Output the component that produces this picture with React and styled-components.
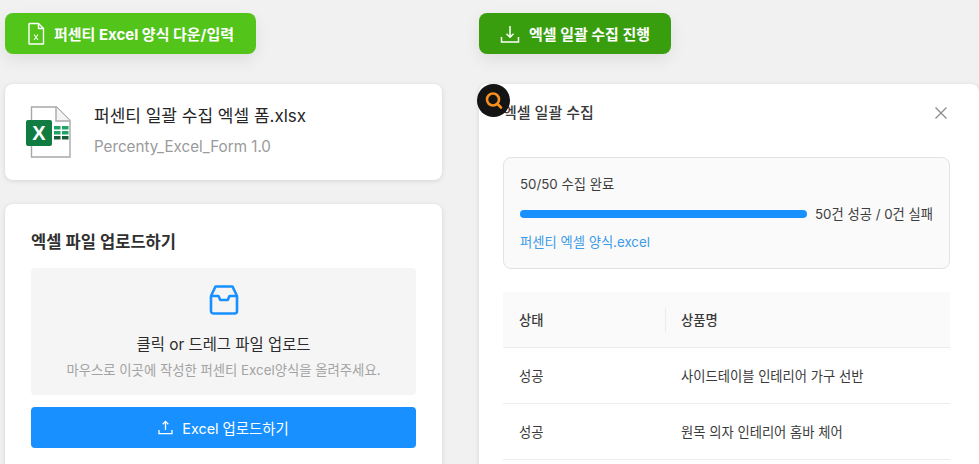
import { createGlobalStyle, styled } from "styled-components";

const Global = createGlobalStyle`
  html, body {
    margin: 0;
    height: 100%;
    overflow: hidden;
    background: #f1f1f1;
  }
  * {
    box-sizing: border-box;
  }
  body {
    font-family: Inter, "Noto Sans CJK KR", "Noto Sans", sans-serif;
  }
`;

const Page = styled.div`
  display: grid;
  grid-template-columns: 437px 500px;
  column-gap: 37px;
  padding: 13px 0 0 5px;
  height: 464px;
  overflow: hidden;
`;

const Column = styled.div`
  display: flex;
  flex-direction: column;
  align-items: flex-start;
`;

const ActionButton = styled.div`
  height: 41px;
  width: ${(p) => p.$width}px;
  border-radius: 8px;
  background: ${(p) => p.$bg};
  color: #fff;
  font-size: 15px;
  font-weight: 700;
  display: flex;
  align-items: center;
  padding-left: ${(p) => p.$pad}px;
  gap: ${(p) => p.$gap}px;
  box-shadow: 0 6px 16px rgba(0, 0, 0, 0.08);
  white-space: nowrap;
`;

const Card = styled.div`
  background: #fff;
  border-radius: 8px;
  width: 100%;
  box-shadow: 0 1px 5px rgba(0, 0, 0, 0.12);
`;

const FileCard = styled(Card)`
  margin-top: 30px;
  height: 96px;
  display: flex;
  align-items: center;
  padding-left: 20px;
  gap: 23px;
`;

const FileText = styled.div`
  display: flex;
  flex-direction: column;
  gap: 9px;
  margin-top: -4px;
`;

const FileName = styled.div`
  font-size: 17px;
  line-height: 24px;
  color: #262626;
`;

const FileVersion = styled.div`
  font-size: 15.2px;
  line-height: 20px;
  color: #9a9a9a;
`;

const UploadCard = styled(Card)`
  margin-top: 24px;
  height: 300px;
  padding: 27px 26px 0;
`;

const UploadTitle = styled.div`
  font-size: 16.5px;
  font-weight: 600;
  line-height: 22px;
  color: #303030;
`;

const DropZone = styled.div`
  margin-top: 15px;
  height: 127px;
  border-radius: 4px;
  background: #f5f5f5;
  display: flex;
  flex-direction: column;
  align-items: center;
  padding-top: 16px;
`;

const DropTitle = styled.div`
  margin-top: 18px;
  font-size: 15.4px;
  line-height: 22px;
  color: #2b2b2b;
`;

const DropHint = styled.div`
  margin-top: 5px;
  font-size: 13.35px;
  line-height: 18px;
  color: #a3a3a3;
  white-space: nowrap;
`;

const UploadButton = styled.div`
  margin-top: 12px;
  height: 41px;
  border-radius: 4px;
  background: #1890ff;
  color: #fff;
  font-size: 14.4px;
  display: flex;
  align-items: center;
  justify-content: center;
  gap: 9px;
`;

const Modal = styled(Card)`
  margin-top: 30px;
  height: 400px;
  width: 500px;
  position: relative;
  padding: 0 29px 0 24px;
`;

const Badge = styled.div`
  position: absolute;
  left: -2px;
  top: 0;
  width: 33px;
  height: 33px;
  border-radius: 50%;
  background: #141414;
  display: flex;
  align-items: center;
  justify-content: center;
`;

const ModalHead = styled.div`
  height: 58px;
  display: flex;
  align-items: center;
  justify-content: space-between;
`;

const ModalTitle = styled.div`
  font-size: 15px;
  font-weight: 500;
  line-height: 20px;
  margin-bottom: 1px;
  color: #3a3a3a;
`;

const CloseIcon = styled.svg`
  width: 14px;
  height: 14px;
  margin-right: 2px;
`;

const ProgressBox = styled.div`
  margin-top: 15px;
  height: 112px;
  border: 1px solid #e3e3e3;
  border-radius: 8px;
  background: #fafafa;
  padding: 17px 16px 0;
  font-size: 13.3px;
  color: #3d3d3d;
`;

const ProgressLabel = styled.div`
  line-height: 18px;
`;

const ProgressRow = styled.div`
  margin-top: 12px;
  display: flex;
  align-items: center;
  gap: 8px;
  line-height: 18px;
  white-space: nowrap;
`;

const Track = styled.div`
  width: 287px;
  height: 8px;
  border-radius: 4px;
  background: #1890ff;
`;

const FileLink = styled.div`
  margin-top: 10px;
  line-height: 18px;
  color: #3c9ae8;
`;

const Table = styled.div`
  margin-top: 23px;
  font-size: 13.3px;
  color: #3a3a3a;
`;

const TableRow = styled.div`
  display: grid;
  grid-template-columns: 146px 1fr;
  height: ${(p) => (p.$head ? 56 : 56)}px;
  align-items: center;
  padding-left: 16px;
  border-bottom: 1px solid #ececec;
  background: ${(p) => (p.$head ? "#fafafa" : "#fff")};
  font-weight: ${(p) => (p.$head ? 500 : 400)};
`;

const NameCell = styled.div`
  padding-left: ${(p) => (p.$head ? 15 : 16)}px;
  ${(p) => (p.$head ? "border-left: 1px solid #ececec; line-height: 24px;" : "")}
`;

const DocIcon = () => (
  <svg width="20" height="24" viewBox="0 0 20 24" fill="none" stroke="#fff" strokeWidth="1.4">
    <path d="M3.5 1.5h9l5 5v15a.5.5 0 0 1-.5.5H3.5a.5.5 0 0 1-.5-.5V2a.5.5 0 0 1 .5-.5z" strokeLinejoin="round" />
    <path d="M12.5 1.5v5h5" strokeLinejoin="round" />
    <path d="M8 12.5l4 5.5M12 12.5l-4 5.5" strokeWidth="1.1" />
  </svg>
);

const DownloadIcon = () => (
  <svg width="20" height="20" viewBox="0 0 20 20" fill="none" stroke="#fff" strokeWidth="1.5">
    <path d="M10 2v11M6.5 9.8L10 13.3l3.5-3.5" />
    <path d="M1.5 13v5h17v-5" />
  </svg>
);

const UploadIcon = () => (
  <svg width="15" height="15" viewBox="0 0 15 15" fill="none" stroke="#fff" strokeWidth="1.3">
    <path d="M7.5 10V1.5M4.7 4.2l2.8-2.8 2.8 2.8" />
    <path d="M1 10v3.6h13V10" />
  </svg>
);

const InboxIcon = () => (
  <svg width="32" height="32" viewBox="0 0 32 32" fill="none" stroke="#1890ff" strokeWidth="2.6" strokeLinejoin="round">
    <path d="M7.5 2.5h17l4.5 9.5v15a2.5 2.5 0 0 1-2.5 2.5h-21A2.5 2.5 0 0 1 3 27V12z" />
    <path d="M3 12h7.5l1.8 4h7.4l1.8-4H29" />
  </svg>
);

const ExcelIcon = () => (
  <svg width="46" height="52" viewBox="0 0 46 52">
    <path d="M6.5 1h25L45 14.5V51H6.5z" fill="#fff" stroke="#a8a8a8" strokeWidth="1.4" />
    <path d="M31 1v14h14" fill="#f4f4f4" stroke="#a8a8a8" strokeWidth="1.4" />
    <rect x="1" y="14" width="26" height="26" rx="2" fill="#107c41" />
    <text x="14" y="33.5" fontSize="20" fontWeight="700" fill="#fff" textAnchor="middle" fontFamily="Liberation Sans, sans-serif">X</text>
    <g fill="#21a366">
      <rect x="29" y="20" width="6.5" height="3.5" />
      <rect x="37" y="20" width="6.5" height="3.5" />
      <rect x="29" y="25" width="6.5" height="3.5" />
      <rect x="37" y="25" width="6.5" height="3.5" />
    </g>
    <g fill="#185c37">
      <rect x="29" y="30" width="6.5" height="3.5" />
      <rect x="37" y="30" width="6.5" height="3.5" />
    </g>
  </svg>
);

const rows = ["사이드테이블 인테리어 가구 선반", "원목 의자 인테리어 홈바 체어"];

export default function App() {
  return (
    <>
      <Global />
      <Page>
        <Column>
          <ActionButton $width={251} $bg="#52c41a" $pad={21} $gap={8}>
            <DocIcon />
            퍼센티 Excel 양식 다운/입력
          </ActionButton>
          <FileCard>
            <ExcelIcon />
            <FileText>
              <FileName>퍼센티 일괄 수집 엑셀 폼.xlsx</FileName>
              <FileVersion>Percenty_Excel_Form 1.0</FileVersion>
            </FileText>
          </FileCard>
          <UploadCard>
            <UploadTitle>엑셀 파일 업로드하기</UploadTitle>
            <DropZone>
              <InboxIcon />
              <DropTitle>클릭 or 드레그 파일 업로드</DropTitle>
              <DropHint>마우스로 이곳에 작성한 퍼센티 Excel양식을 올려주세요.</DropHint>
            </DropZone>
            <UploadButton>
              <UploadIcon />
              Excel 업로드하기
            </UploadButton>
          </UploadCard>
        </Column>
        <Column>
          <ActionButton $width={192} $bg="#389e0d" $pad={21} $gap={9}>
            <DownloadIcon />
            엑셀 일괄 수집 진행
          </ActionButton>
          <Modal>
            <Badge>
              <svg width="21" height="21" viewBox="0 0 21 21" fill="none" stroke="#f5901e" strokeWidth="2.6">
                <circle cx="10" cy="9.5" r="6" />
                <path d="M14.5 14l3.5 3.5" strokeLinecap="round" />
              </svg>
            </Badge>
            <ModalHead>
              <ModalTitle>엑셀 일괄 수집</ModalTitle>
              <CloseIcon viewBox="0 0 14 14" fill="none" stroke="#8c8c8c" strokeWidth="1.3">
                <path d="M1.5 1.5l11 11M12.5 1.5l-11 11" />
              </CloseIcon>
            </ModalHead>
            <ProgressBox>
              <ProgressLabel>50/50 수집 완료</ProgressLabel>
              <ProgressRow>
                <Track />
                50건 성공 / 0건 실패
              </ProgressRow>
              <FileLink>퍼센티 엑셀 양식.excel</FileLink>
            </ProgressBox>
            <Table>
              <TableRow $head>
                <div>상태</div>
                <NameCell $head>상품명</NameCell>
              </TableRow>
              {rows.map((name) => (
                <TableRow key={name}>
                  <div>성공</div>
                  <NameCell>{name}</NameCell>
                </TableRow>
              ))}
            </Table>
          </Modal>
        </Column>
      </Page>
    </>
  );
}
